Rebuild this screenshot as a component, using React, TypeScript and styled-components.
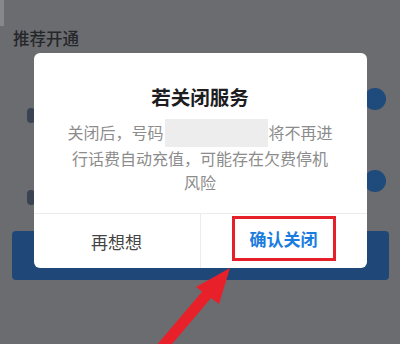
import React from 'react'
import styled, { createGlobalStyle } from 'styled-components'

const GlobalStyle = createGlobalStyle`
  html, body { margin: 0; padding: 0; }
  body {
    width: 400px;
    height: 344px;
    overflow: hidden;
    background: #6b6c70;
    font-family: "Noto Sans CJK SC", "Noto Sans", sans-serif;
  }
`

const Page = styled.div`
  position: relative;
  width: 400px;
  height: 344px;
  background: #6b6c70;
  overflow: hidden;
`

const Backdrop = styled.div`
  display: flex;
  flex-direction: column;
`

const TopEdge = styled.div`
  width: 4px;
  height: 26px;
  background: #87888c;
`

const SectionTitle = styled.div`
  margin: 1px 0 0 13px;
  font-size: 16.5px;
  line-height: 22px;
  font-weight: 500;
  color: #26272b;
`

const List = styled.div`
  display: flex;
  flex-direction: column;
  padding: 39px 14px 0 27px;
  gap: 46px;
`

const Row = styled.div`
  height: 36px;
  display: flex;
  align-items: flex-start;
  justify-content: space-between;
`

const RowMark = styled.div`
  width: 8px;
  height: 15px;
  margin-top: 20px;
  border-radius: 4px;
  background: #3a4352;
`

const Toggle = styled.div`
  width: 22px;
  height: 22px;
  border-radius: 50%;
  background: #1f4a7c;
`

const MainButton = styled.div`
  margin: 25px 11px 0 12px;
  height: 49px;
  border-radius: 4px;
  background: #1f4878;
`

const Overlay = styled.div`
  position: absolute;
  inset: 0;
  display: flex;
  justify-content: center;
  align-items: flex-start;
  padding-top: 53px;
`

const Dialog = styled.div`
  width: 333px;
  background: #ffffff;
  border-radius: 6px;
  display: flex;
  flex-direction: column;
`

const DialogTitle = styled.div`
  padding-top: 31px;
  text-align: center;
  font-size: 19.5px;
  line-height: 26px;
  font-weight: 700;
  color: #1d1d1f;
`

const DialogBody = styled.div`
  margin: 9px 0 0;
  padding: 0 32px 19px;
  text-align: center;
  font-size: 16px;
  line-height: 23.5px;
  color: #8c8c8c;
`

const Masked = styled.span`
  display: inline-block;
  width: 103px;
  height: 28px;
  margin: 0 1px;
  vertical-align: -8px;
  background: #ededed;
`

const Actions = styled.div`
  display: flex;
  height: 54px;
  border-top: 1px solid #ececec;
`

const Action = styled.div<{ $primary?: boolean }>`
  flex: 1;
  display: flex;
  align-items: center;
  justify-content: center;
  font-size: 17px;
  font-weight: ${({ $primary }) => ($primary ? 700 : 400)};
  color: ${({ $primary }) => ($primary ? '#1b7ce0' : '#444444')};
  & + & {
    border-left: 1px solid #ececec;
  }
`

const Highlight = styled.span`
  display: flex;
  align-items: center;
  height: 39px;
  padding: 0 15px;
  margin-top: -5px;
  border: 3px solid #e5202b;
`

const Arrow = styled.svg`
  position: absolute;
  left: 0;
  top: 0;
  pointer-events: none;
`

const App = () => {
  return (
    <Page>
      <GlobalStyle />
      <Backdrop>
        <TopEdge />
        <SectionTitle>推荐开通</SectionTitle>
        <List>
          <Row>
            <RowMark />
            <Toggle />
          </Row>
          <Row>
            <RowMark />
            <Toggle />
          </Row>
        </List>
        <MainButton />
      </Backdrop>

      <Overlay>
        <Dialog>
          <DialogTitle>若关闭服务</DialogTitle>
          <DialogBody>
            关闭后，号码<Masked />将不再进行话费自动充值，可能存在欠费停机风险
          </DialogBody>
          <Actions>
            <Action>再想想</Action>
            <Action $primary>
              <Highlight>确认关闭</Highlight>
            </Action>
          </Actions>
        </Dialog>
      </Overlay>

      <Arrow width="400" height="344" viewBox="0 0 400 344">
        <line x1="158" y1="352" x2="209" y2="292" stroke="#e8202a" strokeWidth="11" />
        <polygon points="230,268 196,287 219,304" fill="#e8202a" />
      </Arrow>
    </Page>
  )
}

export default App
